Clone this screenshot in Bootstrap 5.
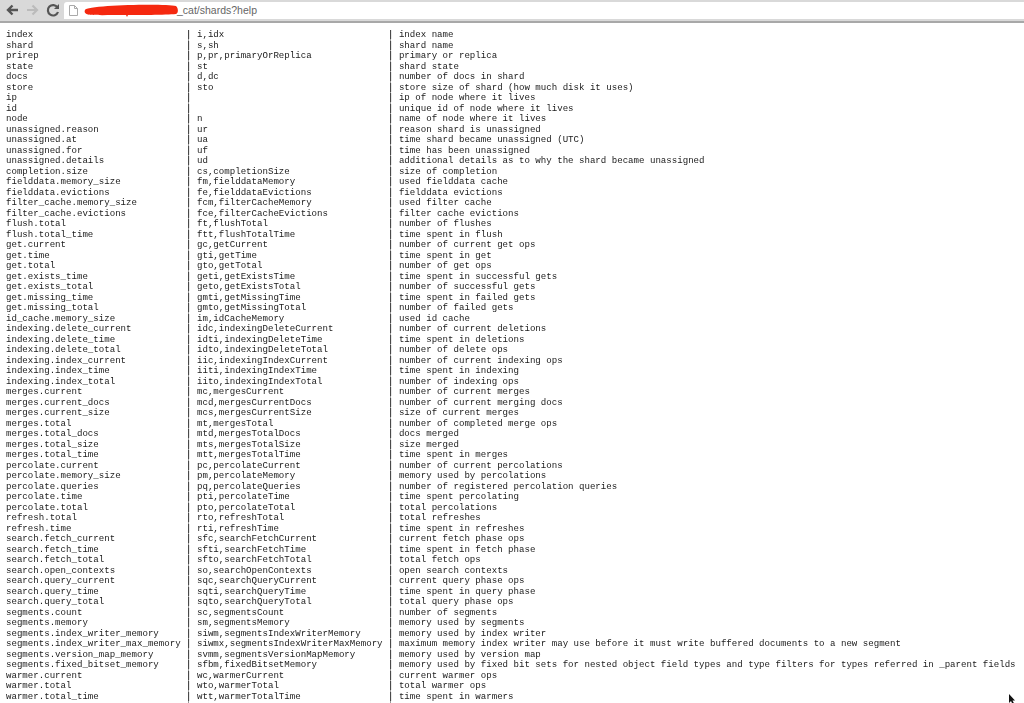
<!DOCTYPE html>
<html lang="en"><head><meta charset="utf-8"><title>_cat/shards?help</title>
<link href="https://cdn.jsdelivr.net/npm/bootstrap@5.3.0/dist/css/bootstrap.min.css" rel="stylesheet">
<style>
html,body{height:703px;overflow:hidden;background:#fff}
.chrome-bar{height:23px;background:#d9d9d9;border-bottom:2px solid #a8a8a8;padding:2px 0 0 5px}
.chrome-btn{width:16px;height:16px;flex:none}
.url-field{background:#fff;height:17px;margin-left:3px;padding-left:5px;font:10.5px/17px "Liberation Sans",sans-serif;color:#666;border-radius:3px 0 0 0}
.doc-icon{flex:none}
.scribble{width:94px;height:13px;flex:none;margin-left:6px;margin-right:-1px}
.help-text{margin:0;padding:7px 0 0 6px;font:9.1px/10.5px "Liberation Mono",monospace;color:#1a1a1a;overflow:hidden;height:680px;filter:blur(.35px);
background:linear-gradient(#999,#999) 188px 7px/1px 100% no-repeat,linear-gradient(#999,#999) 390px 7px/1px 100% no-repeat}
.cursor-mark{position:absolute;left:1008px;top:694px;width:8px;height:11px}
</style></head><body>
<div class="chrome-bar d-flex align-items-start">
<svg class="chrome-btn" viewBox="0 0 16 16"><path d="M13 8H4.500M7.500 3.500 3 8l4.500 4.500" fill="none" stroke="#555" stroke-width="2.400"/></svg>
<svg class="chrome-btn ms-1" viewBox="0 0 16 16"><path d="M2 8h9M7.500 3.500 12 8l-4.500 4.500" fill="none" stroke="#bbb" stroke-width="2.200"/></svg>
<svg class="chrome-btn ms-1" viewBox="0 0 16 16"><path d="M12.500 5.500A5.200 5.200 0 1 0 13 10" fill="none" stroke="#555" stroke-width="2.200"/><path d="M14 2v5H9z" fill="#555"/></svg>
<div class="url-field flex-grow-1 d-flex align-items-center">
<svg class="doc-icon" width="9" height="11" viewBox="0 0 9 11"><path d="M.5.500h5l3 3v7h-8z M5.500.500v3h3" fill="#fff" stroke="#aaa"/></svg>
<svg class="scribble" viewBox="0 0 94 13"><path d="M1 6C3 1 80-.5 92 2c2.500 2 2.500 7 0 8-10 1-40 1-48 1l-1 2-1-2C25 11 8 11.500 4 10.500 1 9.500 0 8 1 6z" fill="#f5280f"/></svg>
<span>_cat/shards?help</span>
</div></div>
<pre class="help-text">index                            | i,idx                              | index name
shard                            | s,sh                               | shard name
prirep                           | p,pr,primaryOrReplica              | primary or replica
state                            | st                                 | shard state
docs                             | d,dc                               | number of docs in shard
store                            | sto                                | store size of shard (how much disk it uses)
ip                               |                                    | ip of node where it lives
id                               |                                    | unique id of node where it lives
node                             | n                                  | name of node where it lives
unassigned.reason                | ur                                 | reason shard is unassigned
unassigned.at                    | ua                                 | time shard became unassigned (UTC)
unassigned.for                   | uf                                 | time has been unassigned
unassigned.details               | ud                                 | additional details as to why the shard became unassigned
completion.size                  | cs,completionSize                  | size of completion
fielddata.memory_size            | fm,fielddataMemory                 | used fielddata cache
fielddata.evictions              | fe,fielddataEvictions              | fielddata evictions
filter_cache.memory_size         | fcm,filterCacheMemory              | used filter cache
filter_cache.evictions           | fce,filterCacheEvictions           | filter cache evictions
flush.total                      | ft,flushTotal                      | number of flushes
flush.total_time                 | ftt,flushTotalTime                 | time spent in flush
get.current                      | gc,getCurrent                      | number of current get ops
get.time                         | gti,getTime                        | time spent in get
get.total                        | gto,getTotal                       | number of get ops
get.exists_time                  | geti,getExistsTime                 | time spent in successful gets
get.exists_total                 | geto,getExistsTotal                | number of successful gets
get.missing_time                 | gmti,getMissingTime                | time spent in failed gets
get.missing_total                | gmto,getMissingTotal               | number of failed gets
id_cache.memory_size             | im,idCacheMemory                   | used id cache
indexing.delete_current          | idc,indexingDeleteCurrent          | number of current deletions
indexing.delete_time             | idti,indexingDeleteTime            | time spent in deletions
indexing.delete_total            | idto,indexingDeleteTotal           | number of delete ops
indexing.index_current           | iic,indexingIndexCurrent           | number of current indexing ops
indexing.index_time              | iiti,indexingIndexTime             | time spent in indexing
indexing.index_total             | iito,indexingIndexTotal            | number of indexing ops
merges.current                   | mc,mergesCurrent                   | number of current merges
merges.current_docs              | mcd,mergesCurrentDocs              | number of current merging docs
merges.current_size              | mcs,mergesCurrentSize              | size of current merges
merges.total                     | mt,mergesTotal                     | number of completed merge ops
merges.total_docs                | mtd,mergesTotalDocs                | docs merged
merges.total_size                | mts,mergesTotalSize                | size merged
merges.total_time                | mtt,mergesTotalTime                | time spent in merges
percolate.current                | pc,percolateCurrent                | number of current percolations
percolate.memory_size            | pm,percolateMemory                 | memory used by percolations
percolate.queries                | pq,percolateQueries                | number of registered percolation queries
percolate.time                   | pti,percolateTime                  | time spent percolating
percolate.total                  | pto,percolateTotal                 | total percolations
refresh.total                    | rto,refreshTotal                   | total refreshes
refresh.time                     | rti,refreshTime                    | time spent in refreshes
search.fetch_current             | sfc,searchFetchCurrent             | current fetch phase ops
search.fetch_time                | sfti,searchFetchTime               | time spent in fetch phase
search.fetch_total               | sfto,searchFetchTotal              | total fetch ops
search.open_contexts             | so,searchOpenContexts              | open search contexts
search.query_current             | sqc,searchQueryCurrent             | current query phase ops
search.query_time                | sqti,searchQueryTime               | time spent in query phase
search.query_total               | sqto,searchQueryTotal              | total query phase ops
segments.count                   | sc,segmentsCount                   | number of segments
segments.memory                  | sm,segmentsMemory                  | memory used by segments
segments.index_writer_memory     | siwm,segmentsIndexWriterMemory     | memory used by index writer
segments.index_writer_max_memory | siwmx,segmentsIndexWriterMaxMemory | maximum memory index writer may use before it must write buffered documents to a new segment
segments.version_map_memory      | svmm,segmentsVersionMapMemory      | memory used by version map
segments.fixed_bitset_memory     | sfbm,fixedBitsetMemory             | memory used by fixed bit sets for nested object field types and type filters for types referred in _parent fields
warmer.current                   | wc,warmerCurrent                   | current warmer ops
warmer.total                     | wto,warmerTotal                    | total warmer ops
warmer.total_time                | wtt,warmerTotalTime                | time spent in warmers
</pre>
<svg class="cursor-mark" viewBox="0 0 8 11"><path d="M1 0v9l2-2 2 4 1.500-.7-2-3.800H7z" fill="#111"/></svg>
<script src="https://cdn.jsdelivr.net/npm/bootstrap@5.3.0/dist/js/bootstrap.bundle.min.js"></script>
</body></html>
